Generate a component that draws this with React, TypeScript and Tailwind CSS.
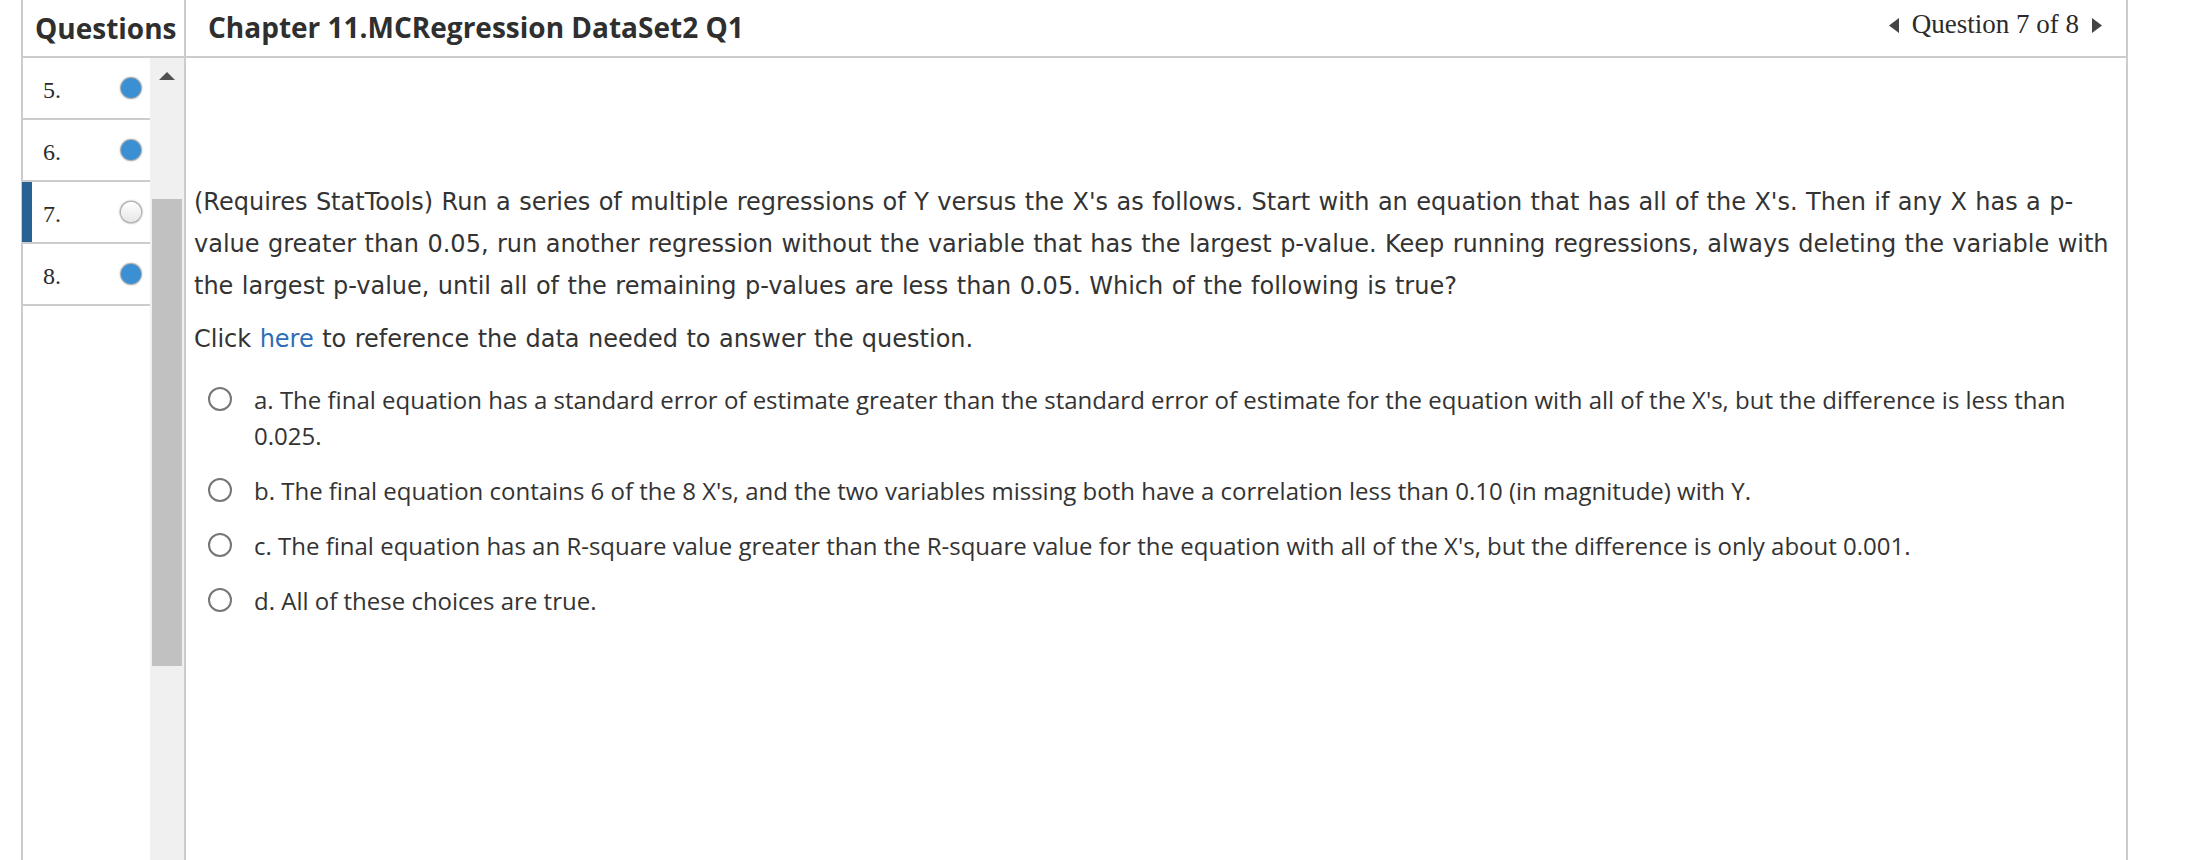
import React from "react";

const rows = [
  { n: "5.", done: true },
  { n: "6.", done: true },
  { n: "7.", done: false, current: true },
  { n: "8.", done: true },
];

const options = [
  "a. The final equation has a standard error of estimate greater than the standard error of estimate for the equation with all of the X's, but the difference is less than 0.025.",
  "b. The final equation contains 6 of the 8 X's, and the two variables missing both have a correlation less than 0.10 (in magnitude) with Y.",
  "c. The final equation has an R-square value greater than the R-square value for the equation with all of the X's, but the difference is only about 0.001.",
  "d. All of these choices are true.",
];

function Dot({ done }: { done: boolean }) {
  if (done) {
    return (
      <span className="block w-[20px] h-[20px] rounded-full bg-[#3b8fd3] shadow-[0_0_1.5px_1px_#8f9aa3]" />
    );
  }
  return (
    <span className="block w-[20px] h-[20px] rounded-full bg-gradient-to-b from-[#ffffff] to-[#e6e6e6] shadow-[0_0_1.5px_1.5px_#a9a9a9]" />
  );
}

export default function App() {
  return (
    <div className="w-[2202px] h-[860px] bg-white overflow-hidden text-[#333333]">
      <div className="ml-[21px] w-[2107px] h-full border-l-2 border-r-2 border-[#cccccc] flex flex-col">
        {/* Header */}
        <div className="h-[58px] shrink-0 border-b-2 border-[#cccccc] flex">
          <div className="w-[163px] shrink-0 border-r-2 border-[#cccccc] pl-[12px] flex items-center">
            <span className="font-['Open_Sans',sans-serif] font-bold text-[28px] leading-none text-[#2f2f2f]">
              Questions
            </span>
          </div>
          <div className="flex-1 flex items-start justify-between pl-[22px] pr-[24px]">
            <span className="pt-[9px] font-['Open_Sans',sans-serif] font-bold text-[28px] leading-[37px] text-[#2f2f2f]">
              Chapter 11.MCRegression DataSet2 Q1
            </span>
            <div className="pt-[9px] flex items-center gap-[13px] font-['Liberation_Serif',serif] text-[27px] leading-[31px] text-[#2b2b2b]">
              <svg width="10" height="15" viewBox="0 0 10 15" className="mt-[2px]">
                <path d="M10 0 L0 7.5 L10 15 Z" fill="#444444" />
              </svg>
              <span>Question 7 of 8</span>
              <svg width="10" height="15" viewBox="0 0 10 15" className="mt-[2px]">
                <path d="M0 0 L10 7.5 L0 15 Z" fill="#444444" />
              </svg>
            </div>
          </div>
        </div>

        {/* Body */}
        <div className="flex-1 flex min-h-0">
          <div className="w-[163px] shrink-0 border-r-2 border-[#cccccc] flex">
            <div className="w-[127px] flex flex-col">
              {rows.map((r) => (
                <div
                  key={r.n}
                  className="relative h-[62px] border-b-2 border-[#cccccc] flex items-center justify-between pl-[20px] pr-[9px]"
                >
                  {r.current && (
                    <span className="absolute left-[-1px] top-0 bottom-0 w-[10px] bg-[#2a6195]" />
                  )}
                  <span className="font-['Liberation_Serif',serif] text-[24px] leading-none pt-[4px] text-[#2b2b2b]">
                    {r.n}
                  </span>
                  <Dot done={r.done} />
                </div>
              ))}
            </div>
            <div className="w-[34px] bg-[#f0f0f0] flex flex-col items-center">
              <svg width="16" height="8" viewBox="0 0 16 8" className="mt-[14px]">
                <path d="M8 0 L16 8 L0 8 Z" fill="#505050" />
              </svg>
              <div className="mt-[119px] w-[30px] h-[467px] bg-[#c1c1c1]" />
            </div>
          </div>

          <div className="flex-1 pl-[8px] pr-[14px] pt-[123px]">
            <p className="font-['DejaVu_Sans',sans-serif] text-[24px] leading-[42px] [word-spacing:0.8px] text-[#333333]">
              (Requires StatTools) Run a series of multiple regressions of Y versus the X's as follows. Start with an equation that has all of the X's. Then if any X has a p-value greater than 0.05, run another regression without the variable that has the largest p-value. Keep running regressions, always deleting the variable with the largest p-value, until all of the remaining p-values are less than 0.05. Which of the following is true?
            </p>
            <p className="mt-[11px] font-['DejaVu_Sans',sans-serif] text-[24px] leading-[42px] [word-spacing:0.8px] text-[#333333]">
              Click <span className="text-[#2f6db7]">here</span> to reference the data needed to answer the question.
            </p>
            <div className="mt-[22px] flex flex-col gap-[19px] pl-[14px]">
              {options.map((o) => (
                <div key={o} className="flex items-start">
                  <span className="mt-[5px] shrink-0 w-[24px] h-[24px] rounded-full border-2 border-[#767676] bg-white" />
                  <span className="ml-[22px] font-['Open_Sans',sans-serif] text-[24px] leading-[36px] text-[#333333]">
                    {o}
                  </span>
                </div>
              ))}
            </div>
          </div>
        </div>
      </div>
    </div>
  );
}
